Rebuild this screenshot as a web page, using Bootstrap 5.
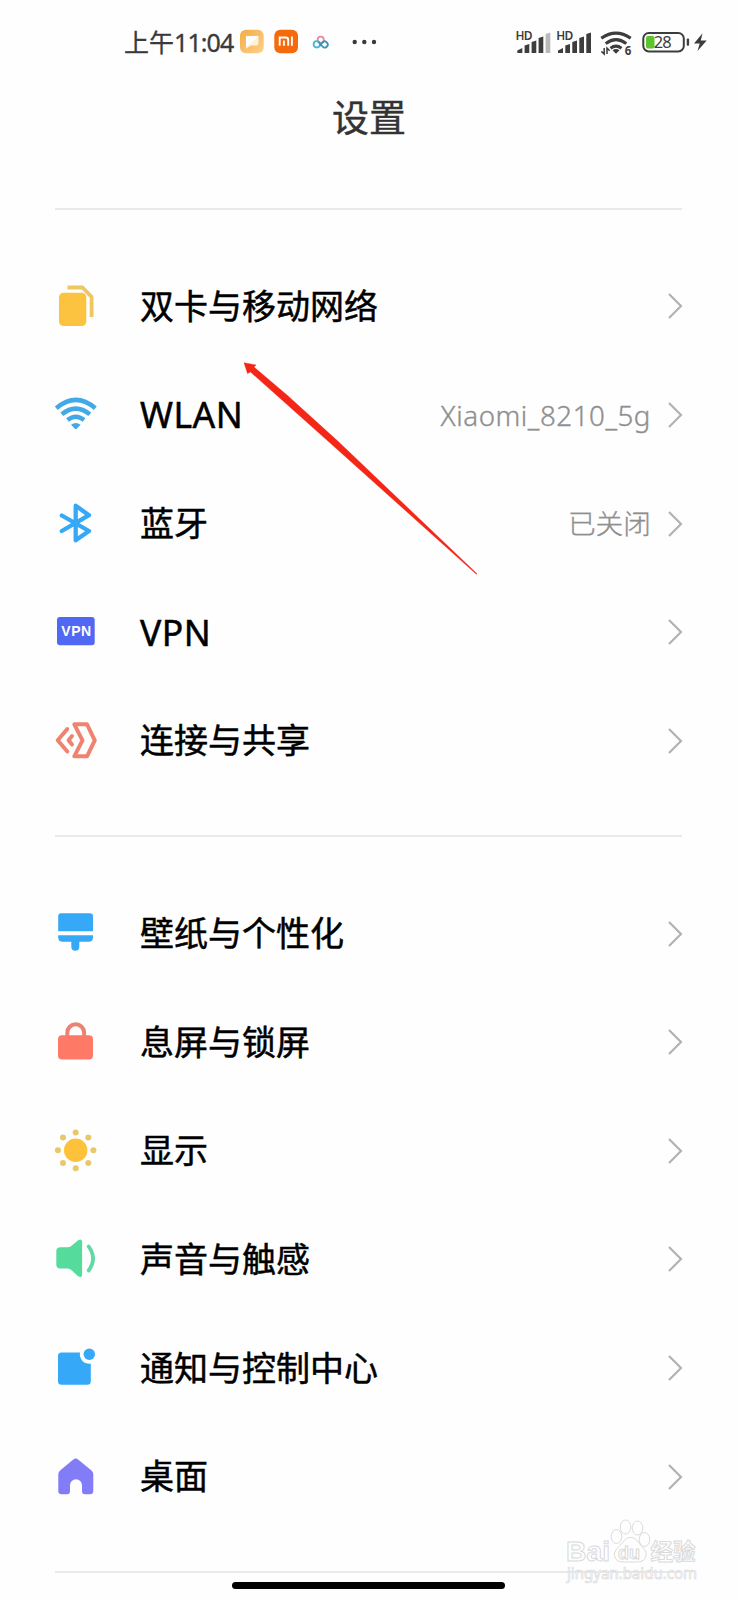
<!DOCTYPE html>
<html lang="zh-CN">
<head>
<meta charset="utf-8">
<meta name="viewport" content="width=device-width, initial-scale=1">
<title>设置</title>
<link href="https://cdn.jsdelivr.net/npm/bootstrap@5.3.0/dist/css/bootstrap.min.css" rel="stylesheet">
<style>
  body { background: #fefefe; font-family: "Noto Sans CJK SC", sans-serif; color: #000; }
  .phone { width: 738px; height: 1600px; }
  svg { display: block; overflow: visible; flex: none; }
  .status { height: 84px; padding: 0 30px 0 124px; color: #3a3a3a; }
  .clock { width: 116px; margin-top: -1px; font-size: 25px; line-height: 1; white-space: nowrap; -webkit-text-stroke: .3px #3a3a3a; }
  .clock-digits { font-family: "Noto Sans", sans-serif; letter-spacing: -.9px; }
  .page-title { height: 124px; padding-top: 12px; font-size: 37px; line-height: 40px; color: #333; -webkit-text-stroke: .4px #333; }
  .rule { height: 2px; margin: 0 56px 0 55px; background: #e9e9e9; }
  .group { padding: 42px 55px 40px 52px; }
  .entry { height: 108.65px; }
  .entry-name { margin: -3px 0 0 40px; font-size: 34px; line-height: 48px; -webkit-text-stroke: .5px #000; white-space: nowrap; }
  .latin { margin-top: -1px; font-family: "Noto Sans", sans-serif; font-size: 35.5px; letter-spacing: .5px; -webkit-text-stroke: .5px #000; }
  .entry-value { margin: -1px 16px 0 0; font-size: 27.7px; font-weight: 300; color: #8f8f8f; white-space: nowrap; -webkit-text-stroke: .35px #8f8f8f; }
  .net-name { font-family: "Noto Sans", sans-serif; letter-spacing: .55px; margin-top: 1px; }
  .chev { fill: none; stroke: #b2b2b2; stroke-width: 2.2; }
  .over { left: 0; top: 0; pointer-events: none; }
  .home-bar { left: 232px; top: 1582px; width: 273px; height: 7px; border-radius: 4px; background: #000; }
</style>
</head>
<body>
<main class="phone position-relative overflow-hidden">
  <header class="status d-flex align-items-center">
    <div class="clock">上午<span class="clock-digits">11:04</span></div>
    <svg width="140" height="26" viewBox="0 0 140 26">
      <defs><linearGradient id="sand" x2="1" y2="1"><stop stop-color="#f5ad43"/><stop offset="1" stop-color="#fbd08a"/></linearGradient></defs>
      <rect y=".7" width="23.700" height="23.500" rx="6" fill="url(#sand)"/>
      <path d="M6 7h12.500v7.500q0 2-2 2h-5.500L6 19.500z" fill="#fff0d8"/><path d="M18.500 7L6 18.500V7z" fill="#fff"/>
      <rect x="34.300" y=".7" width="23.700" height="23.500" rx="6" fill="#f56a0c"/>
      <path d="M39.700 16.800V8.500h6q2.500 0 2.500 2.500v5.800M43.900 11.500v5.300M51.900 7.600v9.200" fill="none" stroke="#fff" stroke-width="1.900"/>
      <g fill="none" stroke-width="1.800"><circle cx="80.700" cy="10.800" r="3.100" stroke="#e9899c"/><circle cx="76.800" cy="15.300" r="3.200" stroke="#45b8d8"/><path d="M78.500 13l4 4.500a3 3 0 1 0 .3-4.300l-3 3.500" stroke="#3a94b8"/></g>
      <g fill="#3a3a3a"><circle cx="114.700" cy="13" r="2.200"/><circle cx="124.300" cy="13" r="2.200"/><circle cx="134" cy="13" r="2.200"/></g>
    </svg>
    <svg class="ms-auto" width="194" height="28" viewBox="0 0 194 28" fill="#3d3d3d">
      <defs><g id="bars"><path d="M3.300 25v-2.500l5-2.500v5zM10.600 25v-7.500l4.700-1.500v9zM17.600 25V14l4.700-1.500V25zM24.600 25V10l4.700-1.500V25z"/></g></defs>
      <use href="#bars"/><path d="M31.600 25V6l4.700-1.500V25z" fill="#b9b9b9"/>
      <use href="#bars" x="40.700"/><path d="M72.300 25V6l4.700-1.500V25z"/>
      <g font-family="Noto Sans" font-weight="600" font-size="12" stroke="#fefefe" stroke-width="2" paint-order="stroke"><text x="1.500" y="12" textLength="17">HD</text><text x="42.200" y="12" textLength="17">HD</text></g>
      <g fill="none" stroke="#3d3d3d" stroke-width="3.100"><path d="M87.300 10.200q14.700-10 29.400 0M91.700 15.600q10.300-8 20.600 0M96.500 20.200q5.500-4 11 0"/></g>
      <path d="M98.500 22.200q3.500-2.500 7 0L102 25.800z"/>
      <path d="M90.200 20v6l-2.800-2.600M93 26v-6l2.700 2.800" fill="none" stroke="#3d3d3d" stroke-width="1.500"/>
      <text x="110.700" y="26.500" font-family="Noto Sans" font-weight="700" font-size="11.500">6</text>
      <rect x="129.300" y="5" width="40.500" height="18.400" rx="5.500" fill="none" stroke="#3d3d3d" stroke-width="2"/>
      <rect x="172.700" y="10.500" width="2.400" height="7.300" rx="1"/>
      <rect x="132" y="8" width="8.500" height="12.400" rx="2" fill="#5cc52c"/>
      <text x="139.700" y="20.300" font-family="Noto Sans" font-size="16.500" textLength="18">28</text>
      <path d="M188.500 5.300L180 15.500h5.700L183.500 23l9.200-10.500h-5.900z"/>
    </svg>
  </header>
  <h1 class="page-title text-center fw-normal mb-0">设置</h1>
  <div class="rule"></div>

  <section class="group">
    <div class="entry d-flex align-items-center">
      <svg width="48" height="48"><rect x="7" y="10.700" width="27.300" height="33.300" rx="4.500" fill="#fbc33f"/><path d="M15.500 5.500H30.500L39.600 14.800V35" fill="none" stroke="#f0c660" stroke-width="3.800" stroke-linejoin="round"/></svg>
      <div class="entry-name">双卡与移动网络</div><svg class="ms-auto" width="16" height="26"><path class="chev" d="M2 1l12 12L2 25"/></svg>
    </div>
    <div class="entry d-flex align-items-center">
      <svg width="48" height="48" fill="none" stroke="#43a9e6" stroke-width="4.500"><path d="M4.300 17.200Q23.800.5 43.300 17.200M9.800 23.300q14-11.400 28 0M15.500 29q8.300-6.500 16.600 0"/><path d="M19 33.700q4.800-3.300 9.600 0l-3.600 3.700q-1.200 1-2.400 0z" fill="#43a9e6" stroke="none"/></svg>
      <div class="entry-name latin">WLAN</div><div class="entry-value net-name ms-auto">Xiaomi_8210_5g</div><svg width="16" height="26"><path class="chev" d="M2 1l12 12L2 25"/></svg>
    </div>
    <div class="entry d-flex align-items-center">
      <svg width="48" height="48"><path d="M9.800 15.500L37 31 23.700 40.300V5.700L37 15.200 9.800 31" fill="none" stroke="#35a9f7" stroke-width="4.300" stroke-linecap="round" stroke-linejoin="round"/></svg>
      <div class="entry-name">蓝牙</div><div class="entry-value ms-auto">已关闭</div><svg width="16" height="26"><path class="chev" d="M2 1l12 12L2 25"/></svg>
    </div>
    <div class="entry d-flex align-items-center">
      <svg width="48" height="48"><rect x="5" y="9" width="37.700" height="28.200" rx="3" fill="#5068f2"/><text x="9.300" y="28.300" font-family="Liberation Sans" font-weight="700" font-size="14" fill="#fff" textLength="29.800">VPN</text></svg>
      <div class="entry-name latin">VPN</div><svg class="ms-auto" width="16" height="26"><path class="chev" d="M2 1l12 12L2 25"/></svg>
    </div>
    <div class="entry d-flex align-items-center">
      <svg width="48" height="48" fill="none" stroke="#ee8370" stroke-width="4" stroke-linecap="round" stroke-linejoin="round"><path d="M15.300 12L5.700 23.200l9.600 11.300M20 19l-3.400 4.200 3.400 4.300M22.300 7.300H35l7.800 16L35 39.300H22.300l8.200-16z"/></svg>
      <div class="entry-name">连接与共享</div><svg class="ms-auto" width="16" height="26"><path class="chev" d="M2 1l12 12L2 25"/></svg>
    </div>
  </section>
  <div class="rule"></div>

  <section class="group">
    <div class="entry d-flex align-items-center">
      <svg width="48" height="48" fill="#35a9f7"><path d="M9 3.200h29q3 0 3 3v15H6.200v-15q0-3 2.800-3zM6.200 25.200H41v2q0 4.500-4.500 4.500h-9.200v5a4 4 0 0 1-8 0v-5h-8.600q-4.500 0-4.500-4.500z"/></svg>
      <div class="entry-name">壁纸与个性化</div><svg class="ms-auto" width="16" height="26"><path class="chev" d="M2 1l12 12L2 25"/></svg>
    </div>
    <div class="entry d-flex align-items-center">
      <svg width="48" height="48"><path d="M15.300 20v-5.300a8.400 8.400 0 0 1 16.800 0V20" fill="none" stroke="#e98475" stroke-width="4"/><rect x="6" y="17.200" width="35" height="24.400" rx="4" fill="#ff7a66"/></svg>
      <div class="entry-name">息屏与锁屏</div><svg class="ms-auto" width="16" height="26"><path class="chev" d="M2 1l12 12L2 25"/></svg>
    </div>
    <div class="entry d-flex align-items-center">
      <svg width="48" height="48"><circle cx="23.700" cy="23.300" r="11.700" fill="#fdc23a"/><g fill="#e8c868"><circle cx="23.700" cy="5.500" r="3"/><circle cx="23.700" cy="41.200" r="3"/><circle cx="5.900" cy="23.300" r="3"/><circle cx="41.400" cy="23.300" r="3"/><circle cx="11" cy="10.600" r="3"/><circle cx="36.300" cy="10.600" r="3"/><circle cx="11" cy="36" r="3"/><circle cx="36.300" cy="36" r="3"/></g></svg>
      <div class="entry-name">显示</div><svg class="ms-auto" width="16" height="26"><path class="chev" d="M2 1l12 12L2 25"/></svg>
    </div>
    <div class="entry d-flex align-items-center">
      <svg width="48" height="48"><path d="M8.300 12.300h7.500q2 0 3.500-1.300l6.500-5.500q4.300-2.800 4.300 1.500v32.500q0 4.300-4.300 1.500L19.300 35q-1.500-1.500-3.500-1.500H8.300q-4 0-4-4V16.300q0-4 4-4z" fill="#55dc9c"/><path d="M36.700 11.500q8.700 12.200 0 24" fill="none" stroke="#62d9a2" stroke-width="3.800" stroke-linecap="round"/></svg>
      <div class="entry-name">声音与触感</div><svg class="ms-auto" width="16" height="26"><path class="chev" d="M2 1l12 12L2 25"/></svg>
    </div>
    <div class="entry d-flex align-items-center">
      <svg width="48" height="48" fill="#35a9f7"><path d="M9.500 8.500H28a9.500 9.500 0 0 0 10.800 11.200v17.600q0 3.500-3.500 3.500H9.500Q6 40.800 6 37.300V12q0-3.500 3.500-3.500z"/><circle cx="37.300" cy="10.300" r="5.700"/></svg>
      <div class="entry-name">通知与控制中心</div><svg class="ms-auto" width="16" height="26"><path class="chev" d="M2 1l12 12L2 25"/></svg>
    </div>
    <div class="entry d-flex align-items-center">
      <svg width="48" height="48"><path d="M21 6.700q2.700-2.200 5.400 0L39.500 17.500q1.800 1.500 1.800 4V38q0 3.300-3.300 3.300h-5q-3 0-3-3v-6a6 6 0 0 0-12 0v6q0 3-3 3H9.600q-3.300 0-3.300-3.300V21.500q0-2.500 1.800-4z" fill="#827cf7"/></svg>
      <div class="entry-name">桌面</div><svg class="ms-auto" width="16" height="26"><path class="chev" d="M2 1l12 12L2 25"/></svg>
    </div>
  </section>
  <div class="rule"></div>

  <!-- red pointer and watermark lie over the list -->
  <svg class="over position-absolute" width="738" height="1600">
    <path d="M244 362.700L256 365l-2 2L287.500 395.500 338 441.300 477 573.700l-.6.500L333.500 446 282 400 250.500 372l-3 1.500z" fill="#f32618" stroke="#f32618" stroke-width=".4"/>
    <g fill="#fefefe" stroke="#dadada" stroke-width="1">
      <text x="566" y="1560.500" font-family="Liberation Sans" font-weight="700" font-size="28" textLength="44" lengthAdjust="spacingAndGlyphs">Bai</text>
      <ellipse cx="616.500" cy="1536.500" rx="5.300" ry="7"/><ellipse cx="625.500" cy="1527" rx="5.300" ry="7"/><ellipse cx="637.500" cy="1528" rx="5.300" ry="7"/><ellipse cx="644.500" cy="1539.500" rx="5.300" ry="7"/>
      <path d="M630.500 1537.500c5 0 7 4 10 7.500 4 4 7 7 5 12.500-2 5-8 4.500-15.500 4.500s-13 .5-15-4.500c-2-5.500 1.500-8.500 5.500-12.500 3-3.500 5-7.500 10-7.500z"/>
      <text x="618" y="1558.500" font-family="Liberation Sans" font-weight="700" font-size="18" textLength="22">du</text>
      <text x="650.500" y="1559.500" font-family="Noto Sans CJK SC" font-weight="700" font-size="22.500" textLength="45">经验</text>
      <text x="567" y="1579" font-family="Noto Sans" font-size="16" stroke-width=".7" textLength="130" lengthAdjust="spacingAndGlyphs">jingyan.baidu.com</text>
    </g>
  </svg>
  <div class="home-bar position-absolute"></div>
</main>
<script src="https://cdn.jsdelivr.net/npm/bootstrap@5.3.0/dist/js/bootstrap.bundle.min.js"></script>
</body>
</html>
